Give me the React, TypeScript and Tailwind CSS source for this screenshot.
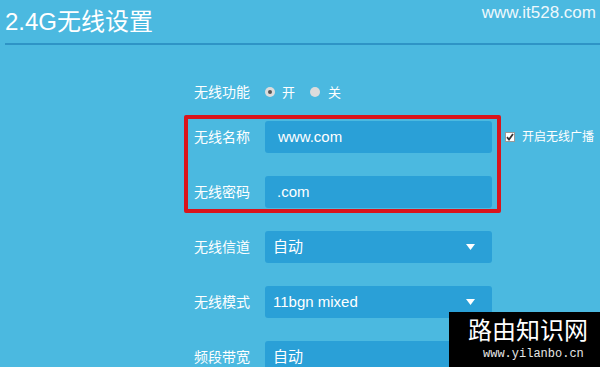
import React from "react";

const cjk = { fontFamily: '"Liberation Sans", "Noto Sans CJK SC", sans-serif' };

function Arrow() {
  return (
    <svg width="9" height="6" viewBox="0 0 9 6" className="absolute right-[17px] top-[13px]">
      <path d="M0 0 H9 L4.5 6 Z" fill="#ffffff" />
    </svg>
  );
}

function Row({ label, children, extra }: { label: string; children: React.ReactNode; extra?: React.ReactNode }) {
  return (
    <div className="flex items-center h-[32px]">
      <div className="w-[71px] text-[14px] text-white leading-none">{label}</div>
      {children}
      {extra}
    </div>
  );
}

function Field({ text, pl, select }: { text: string; pl: string; select?: boolean }) {
  return (
    <div
      className={`relative w-[227px] h-[32px] rounded-[3px] bg-[#2aa0d7] text-white text-[15px] flex items-center ${pl}`}
    >
      {text}
      {select && <Arrow />}
    </div>
  );
}

export default function App() {
  return (
    <div className="relative w-[600px] h-[367px] overflow-hidden bg-[#4bb9e0] text-white" style={cjk}>
      <div className="flex items-start justify-between h-[43px] pl-[5px] pr-[4px]">
        <div className="text-[24px] leading-[32px] pt-[6px] text-white">2.4G无线设置</div>
        <div className="text-[17px] leading-[20px] pt-[3px] text-[#eef8fc]">www.it528.com</div>
      </div>
      <div className="ml-[5px] h-[2px] bg-[#2e94c6]" />

      <div className="ml-[194px] mt-[31px] flex flex-col">
        <Row label="无线功能">
          <div className="flex items-center text-[13px] leading-none">
            <span className="w-[10px] h-[10px] rounded-full bg-[#dcdcdc] flex items-center justify-center">
              <span className="w-[4px] h-[4px] rounded-full bg-[#555]" />
            </span>
            <span className="ml-[7px]">开</span>
            <span className="ml-[15px] w-[10px] h-[10px] rounded-full bg-[#dcdcdc]" />
            <span className="ml-[8px]">关</span>
          </div>
        </Row>
        <div className="mt-[13px] flex flex-col gap-[23px]">
          <Row
            label="无线名称"
            extra={
              <div className="ml-[13px] flex items-center text-[12px] leading-none">
                <span className="w-[10px] h-[10px] bg-white border border-[#999] flex items-center justify-center">
                  <svg width="8" height="8" viewBox="0 0 8 8">
                    <path d="M1 4.2 L3 6.5 L7 1" stroke="#333" strokeWidth="1.8" fill="none" />
                  </svg>
                </span>
                <span className="ml-[7px]">开启无线广播</span>
              </div>
            }
          >
            <Field text="www.com" pl="pl-[13px]" />
          </Row>
          <Row label="无线密码">
            <Field text=".com" pl="pl-[12px]" />
          </Row>
          <Row label="无线信道">
            <Field text="自动" pl="pl-[8px]" select />
          </Row>
          <Row label="无线模式">
            <Field text="11bgn mixed" pl="pl-[8px]" select />
          </Row>
          <Row label="频段带宽">
            <Field text="自动" pl="pl-[8px]" select />
          </Row>
        </div>
      </div>

      <div className="absolute left-[184px] top-[115px] w-[317px] h-[98px] border-[4px] border-[#d9141c] rounded-[2px]" />

      <div className="absolute left-[449px] top-[312px] right-0 bottom-0 bg-black">
        <div className="ml-[19px] mt-[5px] text-[24px] leading-[24px] text-white" style={{ fontFamily: '"Noto Sans CJK SC", sans-serif' }}>
          路由知识网
        </div>
        <div className="ml-[34px] mt-[7px] text-[12px] leading-[12px] text-[#e6e6e6]" style={{ fontFamily: '"Liberation Mono", monospace' }}>
          www.yilanbo.cn
        </div>
      </div>
    </div>
  );
}
